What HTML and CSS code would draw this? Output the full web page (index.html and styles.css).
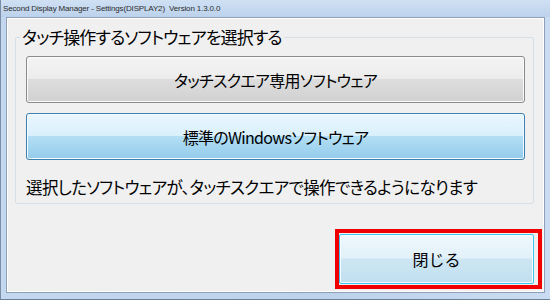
FILE: index.html
```html
<!DOCTYPE html>
<html lang="ja">
<head>
  <meta charset="UTF-8">
  <title>Second Display Manager - Settings</title>
  <link rel="stylesheet" href="styles.css">
</head>
<body>
  <div class="window">
    <div class="titlebar">Second Display Manager - Settings(DISPLAY2)&nbsp; Version 1.3.0.0</div>

    <div class="client">
      <fieldset class="group">
        <legend>タッチ操作するソフトウェアを選択する</legend>
        <button class="choice">タッチスクエア専用ソフトウェア</button>
        <button class="choice selected">標準のWindowsソフトウェア</button>
        <p class="note">選択したソフトウェアが、タッチスクエアで操作できるようになります</p>
      </fieldset>

      <div class="footer">
        <div class="highlight">
          <button class="close-btn">閉じる</button>
        </div>
      </div>
    </div>
  </div>
</body>
</html>
```

FILE: styles.css
```css
body {
  margin: 0;
  width: 550px;
  height: 300px;
  overflow: hidden;
  font-family: "Noto Sans CJK JP", "Noto Sans", sans-serif;
  color: #000;
}
.window {
  width: 550px;
  height: 300px;
  box-sizing: border-box;
  display: flex;
  flex-direction: column;
  background: linear-gradient(90deg, #c3d7ee 0%, #bdd3ec 60%, #c9dcf1 100%);
  border-left: 1px solid #7a8da5;
  border-bottom: 1px solid #6d7f96;
  padding-bottom: 6px;
}
.titlebar {
  height: 17px;
  line-height: 17px;
  padding-left: 2px;
  font-family: "Liberation Sans", Arial, sans-serif;
  font-size: 8px;
  letter-spacing: -0.15px;
  color: #2c2c2c;
  white-space: nowrap;
  background: linear-gradient(180deg, #cfe0f3 0%, #bcd2ec 100%);
}
.client {
  flex: 1;
  margin: 0 5px 0 5px;
  background: #f0f0f0;
  border: 1px solid #8e9fb6;
  box-shadow: inset 0 0 0 1px #ffffff;
  display: flex;
  flex-direction: column;
}
.group {
  margin: 9px 0 0 8px;
  width: 519px;
  box-sizing: border-box;
  padding: 9px 8px 6px 10px;
  border: 1px solid #d5dfe5;
  border-radius: 2px;
  min-width: 0;
}
.group legend {
  margin-left: -6px;
  padding: 0 2px;
  font-size: 17px;
  line-height: 20px;
  font-feature-settings: "palt" 1;
  letter-spacing: -0.85px;
}
.choice {
  display: block;
  width: 499px;
  height: 47px;
  margin: 0 0 10px 0;
  padding: 0;
  font-family: inherit;
  font-size: 16px;
  font-feature-settings: "palt" 1;
  letter-spacing: -0.7px;
  color: #000;
  border: 1px solid #8a8a8a;
  border-radius: 3px;
  background: linear-gradient(180deg, #f4f4f4 0%, #ececec 48%, #dddddd 50%, #d1d1d1 100%);
  box-shadow: inset 0 0 0 1px #fbfbfb;
}
.choice.selected {
  border-color: #3c7fb1;
  background: linear-gradient(180deg, #eaf6fd 0%, #d9f0fc 48%, #b3dff5 50%, #93cbea 100%);
  box-shadow: inset 0 0 0 1px #f4fbff;
}
.note {
  margin: 17px 0 0 0;
  font-size: 16.5px;
  line-height: 20px;
  font-feature-settings: "palt" 1;
  letter-spacing: -0.6px;
}
.footer {
  display: flex;
  justify-content: flex-end;
  margin-top: 25px;
  padding-right: 2px;
}
.highlight {
  border: 4px solid #f00000;
  padding: 1px 4px 1px 0;
}
.close-btn {
  display: block;
  width: 195px;
  height: 50px;
  padding: 0;
  font-family: inherit;
  font-size: 16px;
  color: #000;
  border: 1px solid #3cc4ef;
  border-radius: 2px;
  background: linear-gradient(180deg, #eef7fd 0%, #e2f1fa 48%, #cde6f3 50%, #c1dff0 100%);
  box-shadow: inset 0 0 0 1px #f6fcff;
}
```
